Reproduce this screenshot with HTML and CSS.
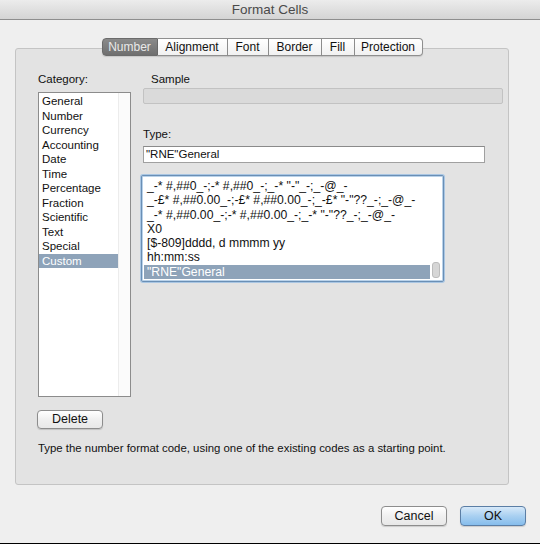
FILE: index.html
```html
<!DOCTYPE html>
<html>
<head>
<meta charset="utf-8">
<link rel="stylesheet" href="styles.css">
</head>
<body>
<div class="window">
  <div class="titlebar">Format Cells</div>
  <div class="content">
    <div class="tabs">
      <span class="tab sel t-number">Number</span>
      <span class="tab t-align">Alignment</span>
      <span class="tab t-font">Font</span>
      <span class="tab t-border">Border</span>
      <span class="tab t-fill">Fill</span>
      <span class="tab last t-prot">Protection</span>
    </div>
    <div class="panel">
      <div class="cols">
        <div class="left">
          <div class="label">Category:</div>
          <div class="catlist">
            <div class="items">
              <div class="item">General</div>
              <div class="item">Number</div>
              <div class="item">Currency</div>
              <div class="item">Accounting</div>
              <div class="item">Date</div>
              <div class="item">Time</div>
              <div class="item">Percentage</div>
              <div class="item">Fraction</div>
              <div class="item">Scientific</div>
              <div class="item">Text</div>
              <div class="item">Special</div>
              <div class="item selected">Custom</div>
            </div>
            <div class="track"></div>
          </div>
        </div>
        <div class="right">
          <div class="label sample-label">Sample</div>
          <div class="sample"></div>
          <div class="label type-label">Type:</div>
          <div class="input">"RNE"General</div>
          <div class="codes">
            <div class="code-items">
              <div class="code">_-* #,##0_-;-* #,##0_-;_-* "-"_-;_-@_-</div>
              <div class="code">_-£* #,##0.00_-;-£* #,##0.00_-;_-£* "-"??_-;_-@_-</div>
              <div class="code">_-* #,##0.00_-;-* #,##0.00_-;_-* "-"??_-;_-@_-</div>
              <div class="code">X0</div>
              <div class="code">[$-809]dddd, d mmmm yy</div>
              <div class="code">hh:mm:ss</div>
              <div class="code selected">"RNE"General</div>
            </div>
            <div class="vscroll"><div class="thumb"></div></div>
          </div>
        </div>
      </div>
      <div class="btn delete">Delete</div>
      <div class="help">Type the number format code, using one of the existing codes as a starting point.</div>
    </div>
    <div class="footer">
      <div class="btn cancel">Cancel</div>
      <div class="btn ok">OK</div>
    </div>
  </div>
</div>
</body>
</html>
```
FILE: styles.css
```css
html, body {
  margin: 0;
  padding: 0;
}
body {
  width: 540px;
  height: 544px;
  overflow: hidden;
  background: #ececec;
  font-family: "Liberation Sans", Arial, sans-serif;
  font-size: 11.5px;
  color: #111;
}
.window {
  width: 540px;
  height: 544px;
  box-sizing: border-box;
  border-bottom: 1px solid #000;
  background: #efefef;
}
.titlebar {
  height: 19px;
  border-bottom: 1px solid #8e8e8e;
  background: linear-gradient(#ececec, #d4d4d4);
  text-align: center;
  font-size: 13.5px;
  line-height: 19px;
  color: #4a4a4a;
}
.content {
  padding: 18px 31px 0 15px;
}
.tabs {
  display: flex;
  justify-content: center;
  height: 18px;
  margin-bottom: -8px;
  position: relative;
  z-index: 2;
}
.tab {
  height: 16px;
  line-height: 16px;
  text-align: center;
  font-size: 12px;
  border: 1px solid #8f8f8f;
  border-left: none;
  background: linear-gradient(#ffffff, #f1f1f1);
  color: #111;
  box-shadow: 0 1px 1px rgba(0,0,0,0.12);
}
.t-number { width: 54px; }
.t-align { width: 69px; }
.t-font { width: 40px; }
.t-border { width: 52px; }
.t-fill { width: 32px; }
.t-prot { width: 67px; }
.tab.sel {
  border-left: 1px solid #777;
  border-radius: 4px 0 0 4px;
  background: linear-gradient(#8a8a8a, #6f6f6f);
  border-color: #6b6b6b;
  color: #e9e9e9;
}
.tab.last {
  border-radius: 0 4px 4px 0;
}
.panel {
  height: 437px;
  box-sizing: border-box;
  border: 1px solid #c4c4c4;
  border-radius: 3px;
  background: #e3e3e3;
  padding: 24px 0 0 22px;
}
.cols {
  display: flex;
  gap: 12px;
}
.left {
  width: 93px;
}
.label {
  height: 13px;
  line-height: 13px;
}
.catlist {
  margin-top: 6px;
  height: 305px;
  box-sizing: border-box;
  border: 1px solid #8c8c8c;
  background: #fff;
  display: flex;
}
.items {
  flex: 1;
  padding-top: 1px;
}
.item {
  height: 14.5px;
  line-height: 14px;
  padding-left: 3px;
}
.item.selected {
  background: #8ea3b9;
  color: #fff;
}
.track {
  width: 11px;
  border-left: 1px solid #ececec;
  background: #fbfbfb;
}
.right {
  width: 362px;
}
.sample-label {
  padding-left: 8px;
}
.sample {
  margin-top: 2px;
  width: 360px;
  height: 16px;
  box-sizing: border-box;
  border: 1px solid #c2c2c2;
  border-radius: 2px;
  background: #dadada;
}
.type-label {
  margin-top: 24px;
}
.input {
  margin-top: 5px;
  width: 342px;
  height: 17px;
  box-sizing: border-box;
  border: 1px solid #a0a0a0;
  border-top-color: #8a8a8a;
  background: #fff;
  padding-left: 2px;
  line-height: 15px;
}
.codes {
  margin-top: 12px;
  margin-left: -2px;
  width: 303px;
  height: 107px;
  box-sizing: border-box;
  border: 1px solid #6a8fb5;
  box-shadow: 0 0 0 1px #a9c6e3, inset 0 0 0 1px #b9d2ea;
  border-radius: 2px;
  background: #fff;
  display: flex;
  padding: 2px;
}
.code-items {
  flex: 1;
  padding-top: 1px;
}
.code {
  height: 14.3px;
  line-height: 14px;
  padding-left: 3px;
  font-size: 12.2px;
  white-space: nowrap;
  overflow: hidden;
}
.code.selected {
  background: #8ea3b9;
  color: #fff;
}
.vscroll {
  width: 11px;
  display: flex;
  flex-direction: column;
  justify-content: flex-end;
  align-items: center;
}
.thumb {
  width: 6px;
  height: 14px;
  border-radius: 3px;
  background: #d6d6d6;
  border: 1px solid #bcbcbc;
  margin-bottom: 1px;
}
.btn {
  height: 19px;
  box-sizing: border-box;
  line-height: 17px;
  text-align: center;
  border: 1px solid #8d8d8d;
  border-radius: 4px;
  background: linear-gradient(#ffffff, #f0f0f0 50%, #e8e8e8);
  box-shadow: 0 1px 1px rgba(0,0,0,0.15);
  font-size: 12.5px;
}
.delete {
  width: 66px;
  margin-top: 13px;
  margin-left: -1px;
}
.help {
  margin-top: 13px;
  line-height: 13px;
  font-size: 11.4px;
}
.footer {
  display: flex;
  justify-content: flex-end;
  gap: 13px;
  margin-top: 21px;
  margin-right: -17px;
}
.cancel, .ok {
  width: 66px;
  height: 20px;
  line-height: 18px;
}
.ok {
  border-color: #5b7ea5;
  background: linear-gradient(#d7e9f9, #a9d0f1 50%, #86bdec);
}
```
